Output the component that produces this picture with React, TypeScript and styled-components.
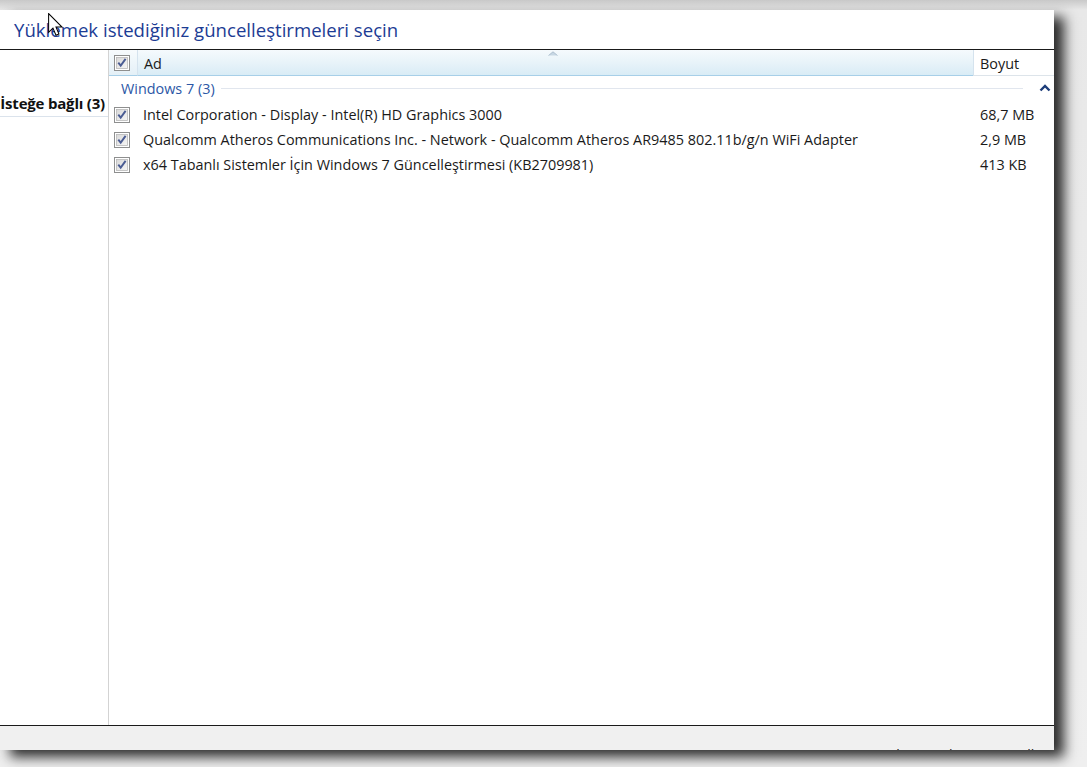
import React from "react";
import styled, { createGlobalStyle } from "styled-components";

const Global = createGlobalStyle`
  html, body { margin: 0; padding: 0; }
  body {
    width: 1087px;
    height: 767px;
    overflow: hidden;
    background: #efefef;
    font-family: "Open Sans", "Noto Sans", "DejaVu Sans", sans-serif;
  }
`;

const Stage = styled.div`
  width: 1087px;
  height: 767px;
  background: linear-gradient(#c9c9c9 0px, #e8e8e8 10px, #efefef 100%);
  padding-top: 10px;
  box-sizing: border-box;
  position: relative;
  overflow: hidden;
`;

const Window = styled.div`
  width: 1054px;
  height: 740px;
  background: #ffffff;
  display: flex;
  flex-direction: column;
  box-shadow: 10px 7px 12px rgba(0, 0, 0, 0.82);
`;

const TitleBar = styled.div`
  height: 40px;
  border-bottom: 1px solid #1a1a1a;
  display: flex;
  align-items: center;
  padding-left: 14px;
  box-sizing: border-box;
`;

const Title = styled.h1`
  margin: 0;
  font-weight: 400;
  font-size: 18.6px;
  color: #1c3c94;
  padding-bottom: 1px;
`;

const Main = styled.div`
  flex: 1;
  display: flex;
  min-height: 0;
`;

const SidePanel = styled.div`
  width: 108px;
  border-right: 1px solid #d3d3d3;
  display: flex;
  flex-direction: column;
  padding-top: 40px;
  flex-shrink: 0;
`;

const SideItem = styled.div`
  height: 27px;
  border-bottom: 1px solid #dbe3ec;
  display: flex;
  align-items: center;
  justify-content: flex-end;
  padding-right: 3px;
  padding-bottom: 1px;
  box-sizing: border-box;
  font-weight: 700;
  font-size: 15px;
  color: #111;
  white-space: nowrap;
  overflow: hidden;
  letter-spacing: -0.2px;
`;

const ListArea = styled.div`
  flex: 1;
  display: flex;
  flex-direction: column;
  min-width: 0;
`;

const HeaderRow = styled.div`
  height: 26px;
  display: grid;
  grid-template-columns: 28px 836px 1fr;
  box-sizing: border-box;
`;

const HeaderCell = styled.div<{ $sorted?: boolean; $first?: boolean }>`
  position: relative;
  display: flex;
  align-items: center;
  box-sizing: border-box;
  font-size: 14.4px;
  color: #1a1a1a;
  padding-left: ${(p) => (p.$first ? "5px" : "6px")};
  padding-top: 1px;
  background: ${(p) =>
    p.$sorted
      ? "linear-gradient(#f5fafd 0%, #e8f3f9 50%, #d9ecf6 100%)"
      : p.$first
      ? "linear-gradient(#f7fbfd, #e4f0f7)"
      : "#ffffff"};
  border-bottom: 1px solid ${(p) => (p.$sorted || p.$first ? "#a7cfe8" : "#dde4ea")};
  border-left: ${(p) => (p.$first ? "none" : "1px solid #d5e3ee")};
`;

const SortArrow = styled.svg`
  position: absolute;
  top: 1px;
  left: 410px;
`;

const GroupRow = styled.div`
  height: 26px;
  display: flex;
  align-items: center;
  padding-left: 12px;
  padding-right: 3px;
  padding-bottom: 2px;
  box-sizing: border-box;
  gap: 6px;
`;

const GroupLabel = styled.span`
  font-size: 14.4px;
  color: #2c57a6;
  white-space: nowrap;
`;

const GroupLine = styled.div`
  flex: 1;
  height: 1px;
  background: #e1e6ee;
  margin-right: 10px;
`;

const Row = styled.div`
  height: 25px;
  display: grid;
  grid-template-columns: 29px 836px 1fr;
  align-items: center;
  padding-left: 5px;
  font-size: 14.4px;
  color: #1a1a1a;
`;

const Cell = styled.div`
  white-space: nowrap;
  overflow: hidden;
  display: flex;
  align-items: center;
`;

const SizeCell = styled(Cell)`
  padding-left: 1px;
`;

const Footer = styled.div`
  height: 25px;
  border-top: 1px solid #1a1a1a;
  background: #f0f0f0;
  box-sizing: border-box;
  display: flex;
  justify-content: flex-end;
  padding-top: 19px;
  overflow: hidden;
`;

const FooterText = styled.span`
  font-size: 14px;
  color: #222;
  white-space: nowrap;
  margin-right: -30px;
`;

const Cursor = styled.svg`
  position: absolute;
  left: 48px;
  top: 13px;
`;

const CheckBox: React.FC = () => (
  <svg width="16" height="16" viewBox="0 0 16 16">
    <defs>
      <linearGradient id="cbg" x1="0" y1="0" x2="1" y2="1">
        <stop offset="0" stopColor="#d9d9d9" />
        <stop offset="1" stopColor="#f6f6f6" />
      </linearGradient>
    </defs>
    <rect x="0.5" y="0.5" width="15" height="15" fill="#ffffff" stroke="#8e8f8f" />
    <rect x="2.5" y="2.5" width="11" height="11" fill="url(#cbg)" stroke="#b8b8b8" strokeWidth="0.8" />
    <path d="M4.3 7.6 L6.7 10.6 L11.6 3.9" fill="none" stroke="#4a5c93" strokeWidth="1.9" />
  </svg>
);

const rows = [
  { name: "Intel Corporation - Display - Intel(R) HD Graphics 3000", size: "68,7 MB" },
  {
    name: "Qualcomm Atheros Communications Inc. - Network - Qualcomm Atheros AR9485 802.11b/g/n WiFi Adapter",
    size: "2,9 MB",
  },
  { name: "x64 Tabanlı Sistemler İçin Windows 7 Güncelleştirmesi (KB2709981)", size: "413 KB" },
];

export default function App() {
  return (
    <>
      <Global />
      <Stage>
        <Window>
          <TitleBar>
            <Title>Yüklemek istediğiniz güncelleştirmeleri seçin</Title>
          </TitleBar>
          <Main>
            <SidePanel>
              <SideItem>İsteğe bağlı (3)</SideItem>
            </SidePanel>
            <ListArea>
              <HeaderRow>
                <HeaderCell $first>
                  <CheckBox />
                </HeaderCell>
                <HeaderCell $sorted>
                  Ad
                  <SortArrow width="10" height="5" viewBox="0 0 10 5">
                    <path d="M0.5 4.5 L5 0.8 L9.5 4.5" fill="#c7d7e4" stroke="#a3b7c8" strokeWidth="0.8" />
                  </SortArrow>
                </HeaderCell>
                <HeaderCell>Boyut</HeaderCell>
              </HeaderRow>
              <GroupRow>
                <GroupLabel>Windows 7 (3)</GroupLabel>
                <GroupLine />
                <svg width="12" height="8" viewBox="0 0 12 8">
                  <path d="M1.5 6.5 L6 2 L10.5 6.5" fill="none" stroke="#1d3d7a" strokeWidth="2.4" />
                </svg>
              </GroupRow>
              {rows.map((r) => (
                <Row key={r.name}>
                  <Cell>
                    <CheckBox />
                  </Cell>
                  <Cell>{r.name}</Cell>
                  <SizeCell>{r.size}</SizeCell>
                </Row>
              ))}
            </ListArea>
          </Main>
          <Footer>
            <FooterText>Toplam seçilen: 3 güncelleştirme</FooterText>
          </Footer>
        </Window>
        <Cursor width="16" height="25" viewBox="0 0 14 22">
          <path
            d="M0.5 0.5 L0.5 17 L4.3 13.3 L7 19.6 L9.6 18.5 L7 12.4 L12.3 12.4 Z"
            fill="#ffffff"
            stroke="#000000"
            strokeWidth="0.9"
            strokeLinejoin="miter"
          />
        </Cursor>
      </Stage>
    </>
  );
}
